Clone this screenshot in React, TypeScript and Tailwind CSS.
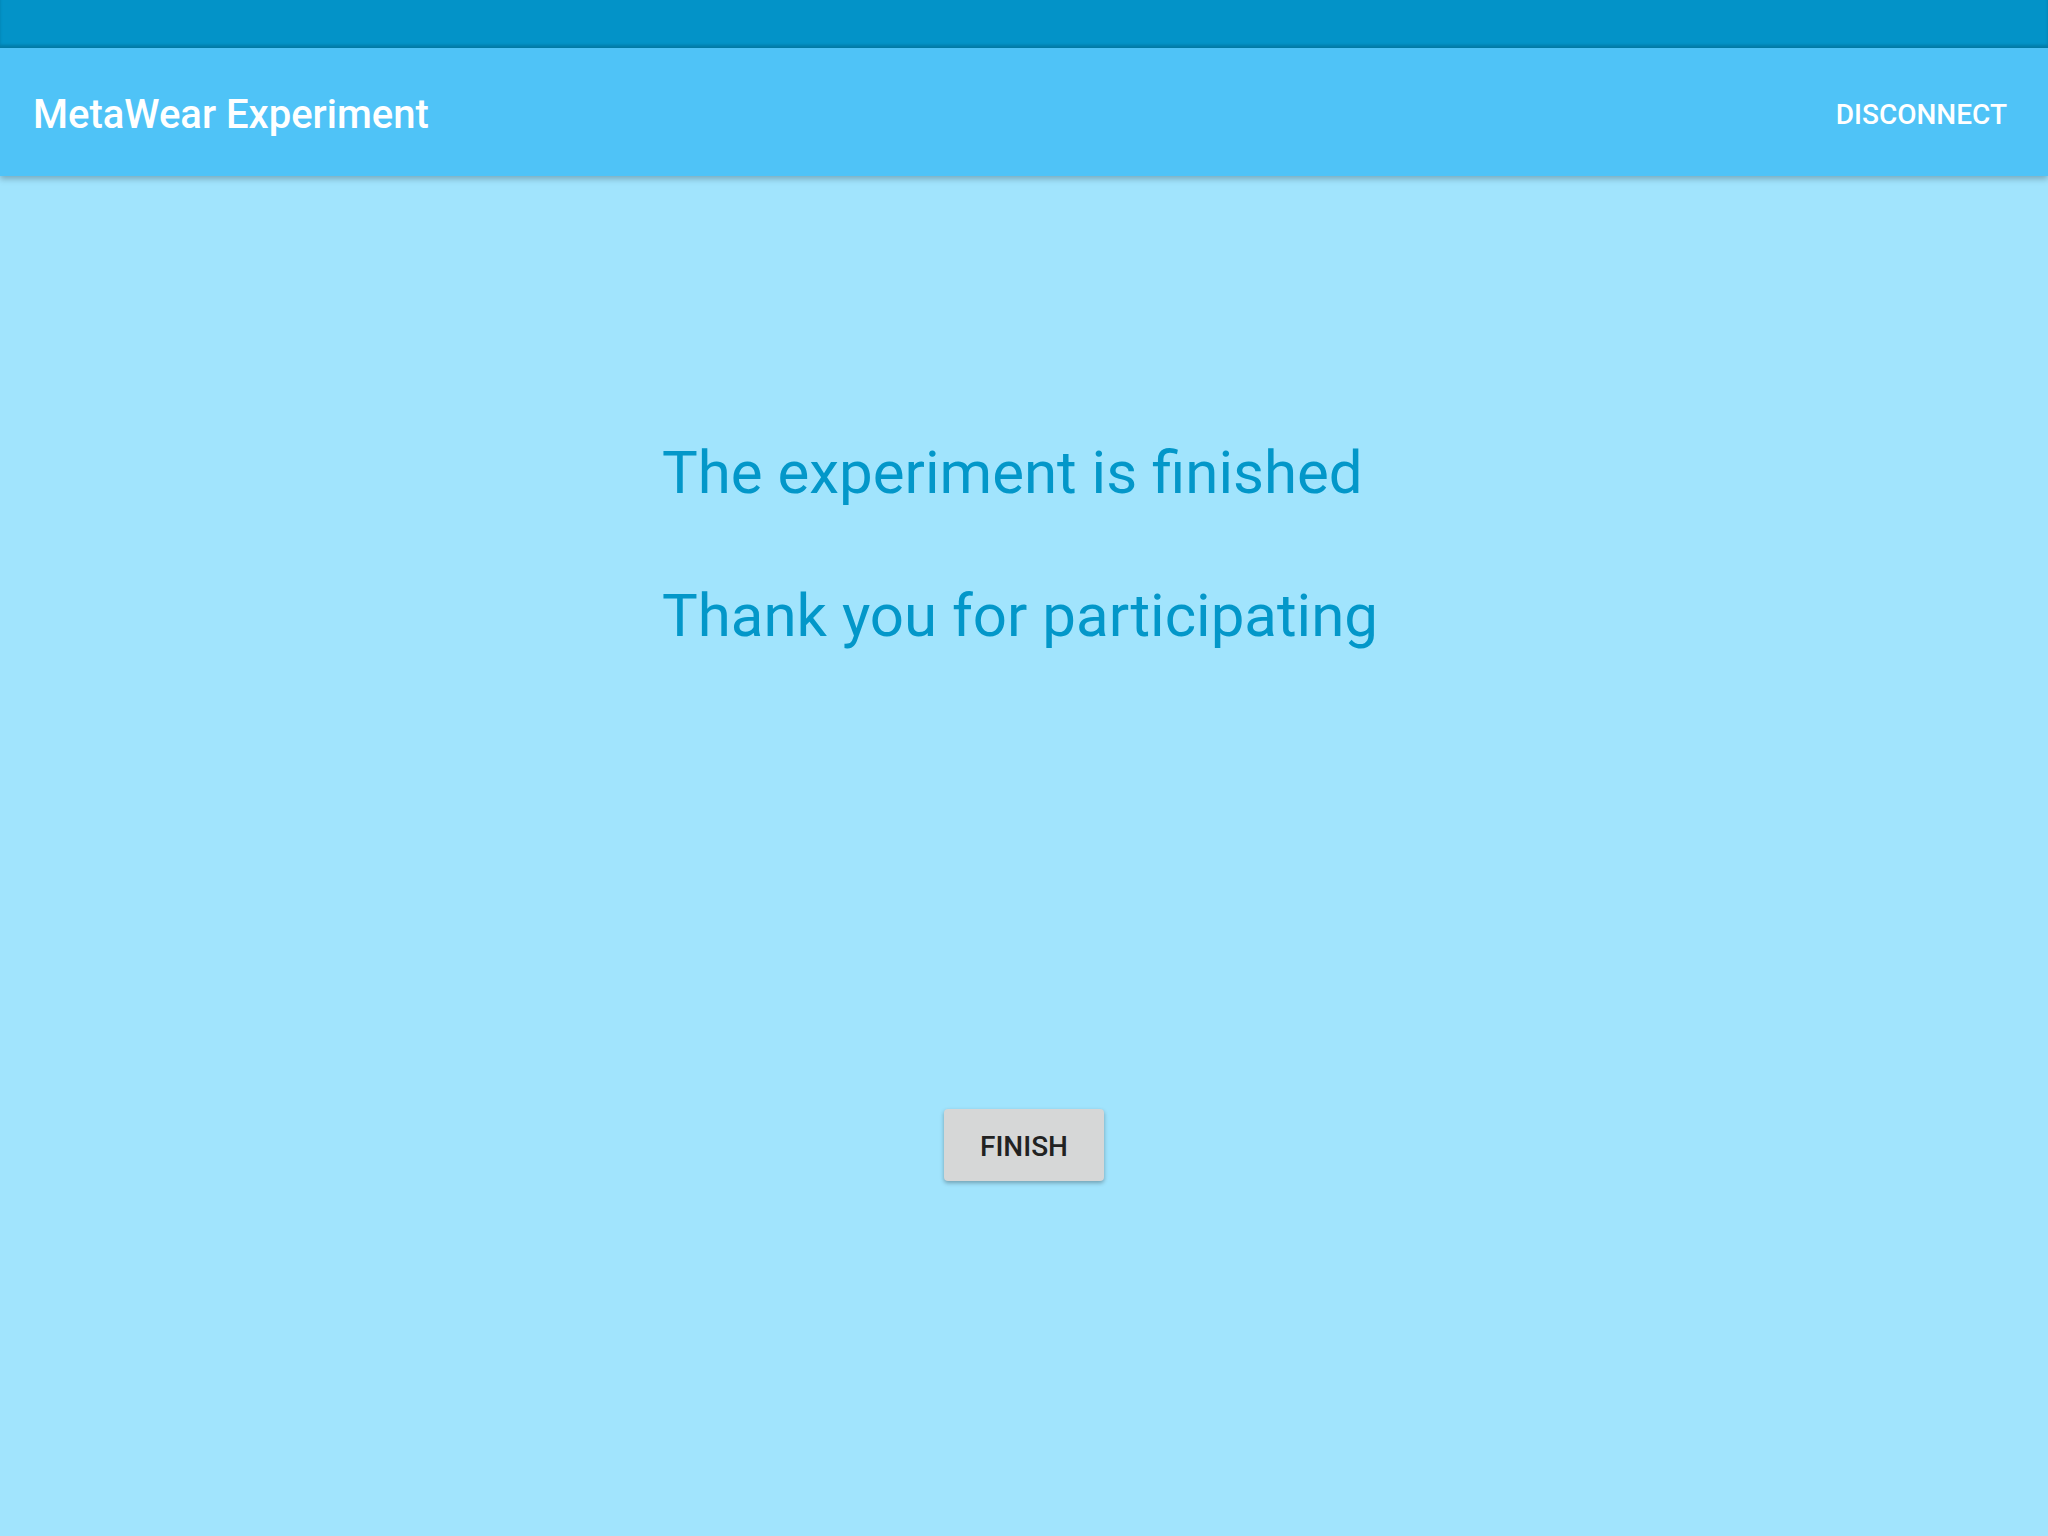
import React from "react";

export default function App() {
  return (
    <div className="w-[2048px] h-[1536px] bg-[#a1e4fd] flex flex-col overflow-hidden" style={{ fontFamily: "Roboto, 'Noto Sans', sans-serif" }}>
      <div className="h-[48px] bg-[#0393c8] shrink-0 shadow-[inset_0_-3px_3px_rgba(0,0,0,0.15)]" />
      <div className="relative z-10 h-[128px] shrink-0 bg-[#4fc3f7] flex items-center justify-between pl-[33px] pr-[41px] pt-[6px] shadow-[0_3px_6px_rgba(0,0,0,0.25)]">
        <div className="text-white text-[40px] font-medium leading-none">MetaWear Experiment</div>
        <div className="text-white text-[28px] font-medium leading-none">DISCONNECT</div>
      </div>
      <div className="flex flex-col items-center">
        <div className="mt-[262px] mr-[8px] flex flex-col text-[#0397c9] text-[60px] leading-[70px] gap-[73px]">
          <div>The experiment is finished</div>
          <div>Thank you for participating</div>
        </div>
        <button className="mt-[458px] w-[160px] h-[72px] rounded-[4px] bg-[#d6d7d7] text-[#222222] text-[28px] font-medium pt-[3px] shadow-[0_2px_4px_rgba(0,0,0,0.3)] flex items-center justify-center">
          FINISH
        </button>
      </div>
    </div>
  );
}
